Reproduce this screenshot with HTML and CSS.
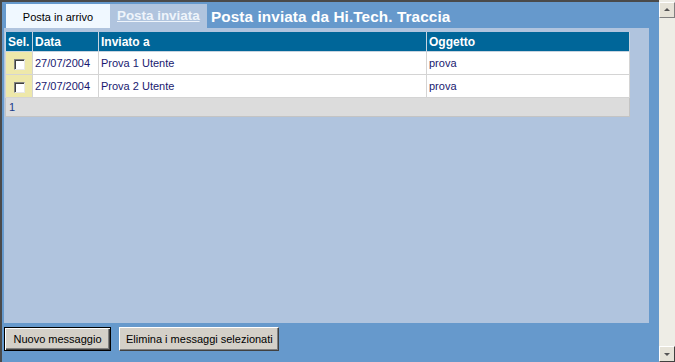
FILE: index.html
```html
<!DOCTYPE html>
<html lang="it">
<head>
    <meta charset="UTF-8">
    <title>Posta inviata</title>
    <link rel="stylesheet" href="styles.css">
</head>
<body>

<div class="frame">
    <div class="tabs">
        <div class="tab tab-in">Posta in arrivo</div>
        <div class="tab tab-sent"><a href="#">Posta inviata</a></div>
        <h1>Posta inviata da Hi.Tech. Traccia</h1>
    </div>

    <div class="panel">
        <table class="mail">
            <tr>
                <th class="col-sel">Sel.</th>
                <th class="col-date">Data</th>
                <th class="col-to">Inviato a</th>
                <th>Oggetto</th>
            </tr>
            <tr>
                <td class="sel"><input type="checkbox"></td>
                <td>27/07/2004</td>
                <td>Prova 1 Utente</td>
                <td>prova</td>
            </tr>
            <tr>
                <td class="sel"><input type="checkbox"></td>
                <td>27/07/2004</td>
                <td>Prova 2 Utente</td>
                <td>prova</td>
            </tr>
            <tr class="pager">
                <td colspan="4">1</td>
            </tr>
        </table>
    </div>

    <div class="actions">
        <button class="btn btn-default">Nuovo messaggio</button>
        <button class="btn btn-delete">Elimina i messaggi selezionati</button>
    </div>
</div>

<div class="scrollbar">
    <div class="arrow arrow-up"></div>
    <div class="arrow arrow-down"></div>
</div>

</body>
</html>
```

FILE: styles.css
```css
body {
    margin: 0;
    width: 675px;
    height: 362px;
    display: flex;
    font-family: "Liberation Sans", Arial, sans-serif;
    overflow: hidden;
}
.frame {
    width: 655px;
    height: 360px;
    background: #6699cc;
    border-top: 2px solid #4a4a4a;
    border-left: 2px solid #4a4a4a;
    padding: 0 0 0 2px;
}
.tabs {
    display: flex;
    align-items: flex-end;
    height: 24px;
    padding: 2px 0 0 2px;
}
.tab {
    height: 24px;
    box-sizing: border-box;
}
.tab-in {
    width: 104px;
    background: #f0f8ff;
    font-size: 11px;
    color: #000000;
    text-align: center;
    line-height: 26px;
}
.tab-sent {
    width: 97px;
    background: #b0c4de;
    padding: 2px 0 0 7px;
}
.tab-sent a {
    font-size: 13.4px;
    font-weight: bold;
    color: #eef4fb;
    line-height: 14px;
}
h1 {
    margin: 0 0 3px 4px;
    font-size: 15.3px;
    letter-spacing: 0.1px;
    line-height: 16px;
    color: #ffffff;
}
.panel {
    width: 644px;
    height: 291px;
    background: #b0c4de;
    padding: 4px 0 0 1px;
}
.mail {
    width: 625px;
    border-collapse: collapse;
    font-size: 11px;
}
.mail th {
    background: #006699;
    color: #ffffff;
    font-size: 12px;
    text-align: left;
    height: 19px;
    padding: 0 0 0 2px;
    border: 1px solid #c8d4e0;
    border-top: none;
}
.mail td {
    background: #ffffff;
    color: #191970;
    height: 22px;
    padding: 0 0 0 2px;
    border: 1px solid #d4d4d4;
}
.col-sel { width: 24px; }
.col-date { width: 63px; }
.col-to { width: 325px; }
.mail td.sel {
    background: #eee8aa;
    text-align: center;
    padding: 0;
}
.sel input {
    width: 11px;
    height: 11px;
    margin: 3px 0 0 0;
    vertical-align: top;
    appearance: none;
    border: 1px solid #808080;
    border-right-color: #e8e8e8;
    border-bottom-color: #e8e8e8;
    box-shadow: inset 1px 1px 0 #404040;
    background: #ffffff;
}
.mail .pager td {
    background: #dcdcdc;
    height: 18px;
    padding-left: 3px;
    color: #1a3a8a;
    border-color: #c4c4c4;
}
.actions {
    display: flex;
    gap: 8px;
    padding: 4px 0 0 0;
}
.btn {
    height: 24px;
    padding: 0 6px;
    background: #d4d0c8;
    font-family: "Liberation Sans", Arial, sans-serif;
    font-size: 11px;
    color: #000000;
    white-space: nowrap;
    box-sizing: border-box;
    border: 1px solid;
    border-color: #ffffff #404040 #404040 #ffffff;
    box-shadow: inset -1px -1px 0 #808080;
}
.btn-default {
    width: 107px;
    border-color: #000000;
    box-shadow: inset 1px 1px 0 #ffffff, inset -1px -1px 0 #404040, inset -2px -2px 0 #808080;
}
.btn-delete {
    width: 160px;
}
.scrollbar {
    width: 16px;
    height: 362px;
    background: #eeede6;
    display: flex;
    flex-direction: column;
    justify-content: space-between;
    padding-top: 2px;
    box-sizing: border-box;
}
.arrow {
    height: 14px;
    width: 14px;
    background: #e6e3d8;
    border: 1px solid;
    border-color: #ffffff #808080 #808080 #ffffff;
    position: relative;
}
.arrow::after {
    content: "";
    position: absolute;
    left: 4px;
    border-left: 3px solid transparent;
    border-right: 3px solid transparent;
}
.arrow-up::after {
    top: 5px;
    border-bottom: 3px solid #555555;
}
.arrow-down {
    border-right-color: #404040;
    border-bottom-color: #404040;
}
.arrow-down::after {
    top: 6px;
    border-top: 3px solid #555555;
}
```
